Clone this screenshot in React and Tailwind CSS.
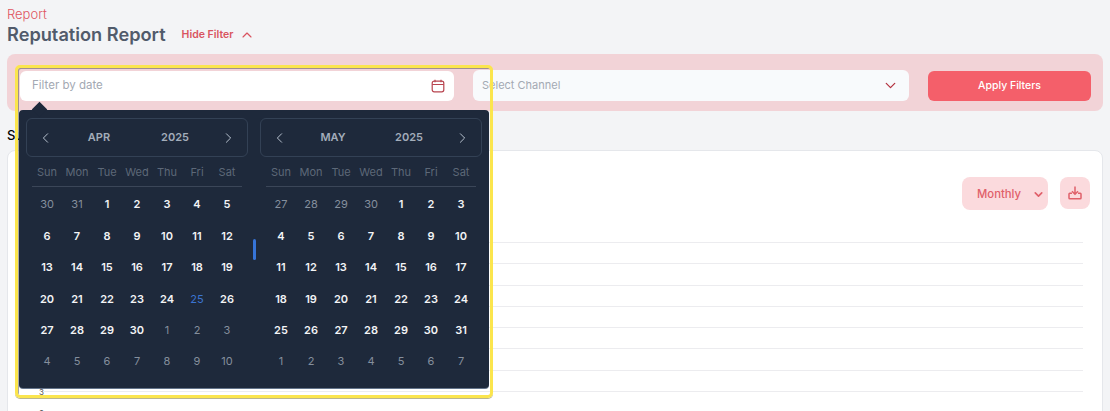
import { ChevronDown, ChevronLeft, ChevronRight, ChevronUp } from "lucide-react";

const weekdays = ["Sun", "Mon", "Tue", "Wed", "Thu", "Fri", "Sat"];

const range = (from, to) => {
  const out = [];
  for (let d = from; d <= to; d++) out.push(d);
  return out;
};

const months = [
  {
    name: "APR",
    before: [30, 31],
    days: range(1, 30),
    after: range(1, 10),
    today: 25,
  },
  {
    name: "MAY",
    before: [27, 28, 29, 30],
    days: range(1, 31),
    after: range(1, 7),
  },
];

const Month = ({ month }) => (
  <div className="w-[222px]">
    <div className="h-[39px] flex items-center justify-between px-[10px] border border-[#334155] rounded-md text-[#cbd5e1]">
      <ChevronLeft className="w-[18px] h-[18px] text-[#cbd5e1]" strokeWidth={1.25} />
      <div className="mr-[14px] flex items-center text-center text-[11px] font-semibold text-[#a3adba]">
        <span className="w-[90px]">{month.name}</span>
        <span className="w-[62px]">2025</span>
      </div>
      <ChevronRight className="w-[18px] h-[18px] text-[#cbd5e1]" strokeWidth={1.25} />
    </div>

    <div className="mx-[6px] mt-[7px] h-[23px] grid grid-cols-7 border-b border-[#3b4658] pb-[4px] text-[11px] text-[#5d6878]">
      {weekdays.map((day) => (
        <span key={day} className="text-center">{day}</span>
      ))}
    </div>

    <div className="mx-[6px] mt-[2px] grid grid-cols-7 auto-rows-[31.4px] items-center text-center text-[11px]">
      {month.before.map((d) => (
        <span key={`b${d}`} className="text-[#858f9d]">{d}</span>
      ))}
      {month.days.map((d) => (
        <span key={d} className={d === month.today ? "font-normal text-[#3b74d1]" : "font-semibold text-[#f3f4f6]"}>{d}</span>
      ))}
      {month.after.map((d) => (
        <span key={`a${d}`} className="text-[#858f9d]">{d}</span>
      ))}
    </div>
  </div>
);

const DatePicker = () => (
  <div className="absolute left-[19px] top-[110px] w-[470px] h-[278px] bg-[#1e293b] rounded-[4px] shadow-[0_1px_0_#64748b] p-[8px_7px]">
    <div className="absolute left-[15px] -top-[6px] w-[11px] h-[11px] rotate-45 bg-[#1e293b]"></div>
    <div className="relative flex gap-[12px]">
      <Month month={months[0]} />
      <Month month={months[1]} />
    </div>
    <div className="absolute left-[234px] top-[129px] w-[3px] h-[21px] rounded-sm bg-[#3674d8]"></div>
  </div>
);

const gridLabels = ["", "", "", "", "", "", "", "3", "0"];

export default function App() {
  return (
    <div className="relative w-full h-[411px] overflow-hidden bg-[#f3f4f6] px-[7px] pt-[6px] font-['Inter','Noto_Sans',sans-serif]">
      {/* Header */}
      <p className="text-[13px] leading-[16px] font-light text-[#e0555f]">Report</p>
      <div className="mt-[1px] h-[24px] flex items-center">
        <h1 className="text-[18.2px] font-semibold text-[#515b6b]">Reputation Report</h1>
        <button className="ml-[16px] flex items-center gap-[6px] text-[10.5px] font-semibold text-[#d9545f]">
          Hide Filter
          <ChevronUp className="w-[16px] h-[16px]" strokeWidth={1.75} />
        </button>
      </div>

      {/* Filters */}
      <div className="mt-[7px] h-[57px] w-[1096px] rounded-lg bg-[#f2d3d7] flex items-start pt-[16px] pl-[13px] pr-[12px]">
        <div className="mt-[1px] w-[434px] h-[30px] bg-white rounded-md flex items-center justify-between pl-[12px] pr-[9px] text-[11.5px] text-[#a3a9b3]">
          Filter by date
          <svg width="14" height="14" viewBox="0 0 14 14" fill="none" stroke="#b8444f" strokeWidth="1.2">
            <rect x="1.2" y="2.2" width="11.6" height="10.6" rx="2" />
            <path d="M1.2 5.5h11.6M4 .8v2.4M10 .8v2.4" />
          </svg>
        </div>
        <div className="ml-[19px] w-[436px] h-[31px] bg-[#f8fafc] rounded-md flex items-center justify-between pl-[9px] pr-[10px] text-[11px] text-[#a3a9b3]">
          Select Channel
          <ChevronDown className="w-[17px] h-[17px] text-[#b3323f]" strokeWidth={1.75} />
        </div>
        <button className="mt-[1px] ml-[19px] w-[163px] h-[30px] rounded-md bg-[#f45f6a] text-[10.5px] font-medium text-white">Apply Filters</button>
      </div>

      {/* Section */}
      <h2 className="mt-[16px] h-[17px] text-[13px] leading-[17px] font-medium text-black">Summary</h2>
      <div className="mt-[6px] h-[300px] w-[1096px] bg-white rounded-lg border border-[#e5e7eb] pt-[26px] pr-[12px]">
        <div className="flex justify-end gap-[12px]">
          <div className="w-[86px] h-[33px] rounded-lg bg-[#fbdadd] flex items-center justify-between pl-[15px] pr-[3px] pt-[1px] text-[11.3px] font-medium text-[#e0606a]">
            Monthly
            <ChevronDown className="w-[13px] h-[13px]" strokeWidth={3} />
          </div>
          <div className="w-[30px] h-[32px] rounded-lg bg-[#fbdadd] flex items-center justify-center">
            <svg width="16" height="16" viewBox="0 0 16 16" fill="none" stroke="#e0606a" strokeWidth="1.5">
              <path d="M8 1.500v7.500M5 6.300L8 9.300l3-3" />
              <path d="M5 8.300H2.800a.8.8 0 0 0-.8.8v3.800c0 .6.4.9.9.9h10.200c.5 0 .9-.3.9-.9V9.100a.8.8 0 0 0-.8-.8H11" />
            </svg>
          </div>
        </div>

        {/* Chart grid */}
        <div className="mt-[32px] pl-[36px] mr-[7px]">
          {gridLabels.map((label, i) => (
            <div key={i} className="relative h-[21.3px] border-t border-[#ececef]">
              {label && <span className="absolute -left-[5px] -top-[5px] bg-white text-[8px] leading-[10px] text-[#555]">{label}</span>}
            </div>
          ))}
        </div>
      </div>

      <DatePicker />

      {/* Highlight frame */}
      <div className="absolute left-[15px] top-[65px] w-[478px] h-[333px] rounded-[5px] border-[3px] border-[#fbe54d] shadow-[inset_1px_1px_0_rgba(60,60,60,0.45),0_1px_0_rgba(120,110,30,0.5)] pointer-events-none"></div>
    </div>
  );
}
